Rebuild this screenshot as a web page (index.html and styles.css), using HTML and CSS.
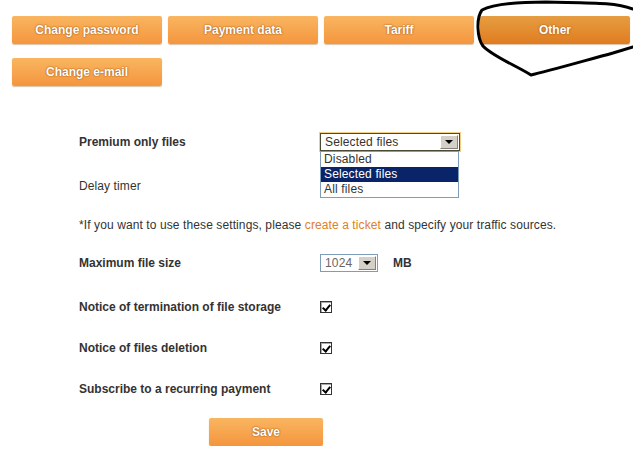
FILE: index.html
```html
<!DOCTYPE html>
<html lang="en">
  <head>
    <meta charset="UTF-8" />
    <title>Settings</title>
    <link rel="stylesheet" href="styles.css">
  </head>
  <body>
    <div class="tabs">
      <button class="btn">Change password</button>
      <button class="btn">Payment data</button>
      <button class="btn">Tariff</button>
      <button class="btn active">Other</button>
      <button class="btn">Change e-mail</button>
    </div>

    <svg class="scribble" width="633" height="100" viewBox="0 0 633 100">
      <path d="M 633 9 C 615 2, 590 3, 546 2 C 520 2, 495 3, 482 10 C 476 18, 477 38, 483 46 C 492 56, 515 65, 531 75 C 545 72, 580 62, 613 53 L 633 47" />
    </svg>

    <div class="form">
      <div class="row r1">
        <div class="label bold">Premium only files</div>
        <div class="value">
          <div class="select focused wide">
            <span class="selText">Selected files</span>
            <span class="arrow"></span>
          </div>
          <ul class="options">
            <li>Disabled</li>
            <li class="selected">Selected files</li>
            <li>All files</li>
          </ul>
        </div>
      </div>

      <div class="row r2">
        <div class="label">Delay timer</div>
      </div>

      <p class="note">*If you want to use these settings, please <a href="#">create a ticket</a> and specify your traffic sources.</p>

      <div class="row r4">
        <div class="label bold">Maximum file size</div>
        <div class="value">
          <div class="select small">
            <span class="selText grey">1024</span>
            <span class="arrow"></span>
          </div>
          <span class="unit">MB</span>
        </div>
      </div>

      <div class="row r5">
        <div class="label bold">Notice of termination of file storage</div>
        <div class="value"><span class="check"></span></div>
      </div>

      <div class="row r5">
        <div class="label bold">Notice of files deletion</div>
        <div class="value"><span class="check"></span></div>
      </div>

      <div class="row r6">
        <div class="label bold">Subscribe to a recurring payment</div>
        <div class="value"><span class="check"></span></div>
      </div>

      <button class="btn save">Save</button>
    </div>
  </body>
</html>
```

FILE: styles.css
```css
body {
  margin: 0;
  background: #fff;
  font-family: 'Liberation Sans', Arial, sans-serif;
  font-size: 12px;
  color: #333;
  position: relative;
}

.tabs {
  display: flex;
  flex-wrap: wrap;
  column-gap: 6px;
  row-gap: 14px;
  padding: 16px 0 0 12px;
}

.btn {
  width: 150px;
  height: 28px;
  padding: 0;
  border: none;
  border-radius: 2px;
  background: linear-gradient(#f9b560, #f4963e);
  box-shadow: 0 1px 1px rgba(150, 90, 20, 0.35);
  font-family: 'Liberation Sans', Arial, sans-serif;
  font-size: 12px;
  font-weight: bold;
  color: #fff;
  text-shadow: 0 0 2px #a85a12, 0 0 1px #a85a12;
  cursor: pointer;
}

.btn.active {
  background: linear-gradient(#e69d42, #e07c20);
}

.scribble {
  position: absolute;
  top: 0;
  left: 0;
  pointer-events: none;
}

.scribble path {
  fill: none;
  stroke: #000;
  stroke-width: 3;
  stroke-linecap: round;
  stroke-linejoin: round;
}

.form {
  margin-top: 47px;
  padding-left: 79px;
}

.row {
  display: flex;
  align-items: center;
  height: 18px;
}

.r1 { margin-bottom: 26px; }
.r2 { margin-bottom: 21px; }
.r4 { margin-bottom: 26px; }
.r5 { margin-bottom: 23px; }
.r6 { margin-bottom: 20px; }

.label {
  width: 241px;
  flex: none;
  letter-spacing: 0.1px;
}

.label.bold {
  font-weight: bold;
  letter-spacing: 0;
}

.value {
  position: relative;
  display: flex;
  align-items: center;
}

.select {
  box-sizing: border-box;
  height: 18px;
  display: flex;
  align-items: center;
  justify-content: space-between;
  padding: 0 1px 0 4px;
  border: 1px solid #7f9db9;
  background: #fff;
}

.select.wide {
  width: 140px;
}

.select.small {
  width: 58px;
}

.select.focused {
  border-color: #4b4b35;
  box-shadow: 0 0 0 1px #f3cf86;
}

.selText {
  font-size: 12px;
  letter-spacing: 0.15px;
  color: #333;
}

.selText.grey {
  color: #666;
}

.arrow {
  box-sizing: border-box;
  width: 18px;
  height: 14px;
  background: #d4d0c8;
  border: 1px solid;
  border-color: #fff #808080 #808080 #fff;
  position: relative;
}

.arrow::after {
  content: "";
  position: absolute;
  left: 4px;
  top: 4px;
  border-left: 4px solid transparent;
  border-right: 4px solid transparent;
  border-top: 4px solid #000;
}

.options {
  position: absolute;
  top: 18px;
  left: 0;
  width: 139px;
  box-sizing: border-box;
  margin: 0;
  padding: 0;
  list-style: none;
  border: 1px solid #7f9db9;
  background: #fff;
}

.options li {
  height: 15px;
  line-height: 15px;
  padding-left: 3px;
  font-size: 12px;
  letter-spacing: 0.15px;
  color: #333;
}

.options li.selected {
  background: #0a246a;
  color: #fff;
}

.note {
  margin: 0 0 20px;
  height: 18px;
  line-height: 18px;
  letter-spacing: 0.1px;
}

.note a {
  color: #e0801e;
  text-decoration: none;
}

.unit {
  margin-left: 15px;
  font-weight: bold;
}

.check {
  box-sizing: border-box;
  width: 12px;
  height: 12px;
  border: 1px solid #333;
  background: #fff;
  box-shadow: inset 1px 1px 0 #aaa;
  position: relative;
}

.check::after {
  content: "";
  position: absolute;
  left: 3px;
  top: 1px;
  width: 3px;
  height: 6px;
  border: solid #000;
  border-width: 0 2px 2px 0;
  transform: rotate(40deg);
}

.save {
  width: 114px;
  margin-left: 130px;
}
```
